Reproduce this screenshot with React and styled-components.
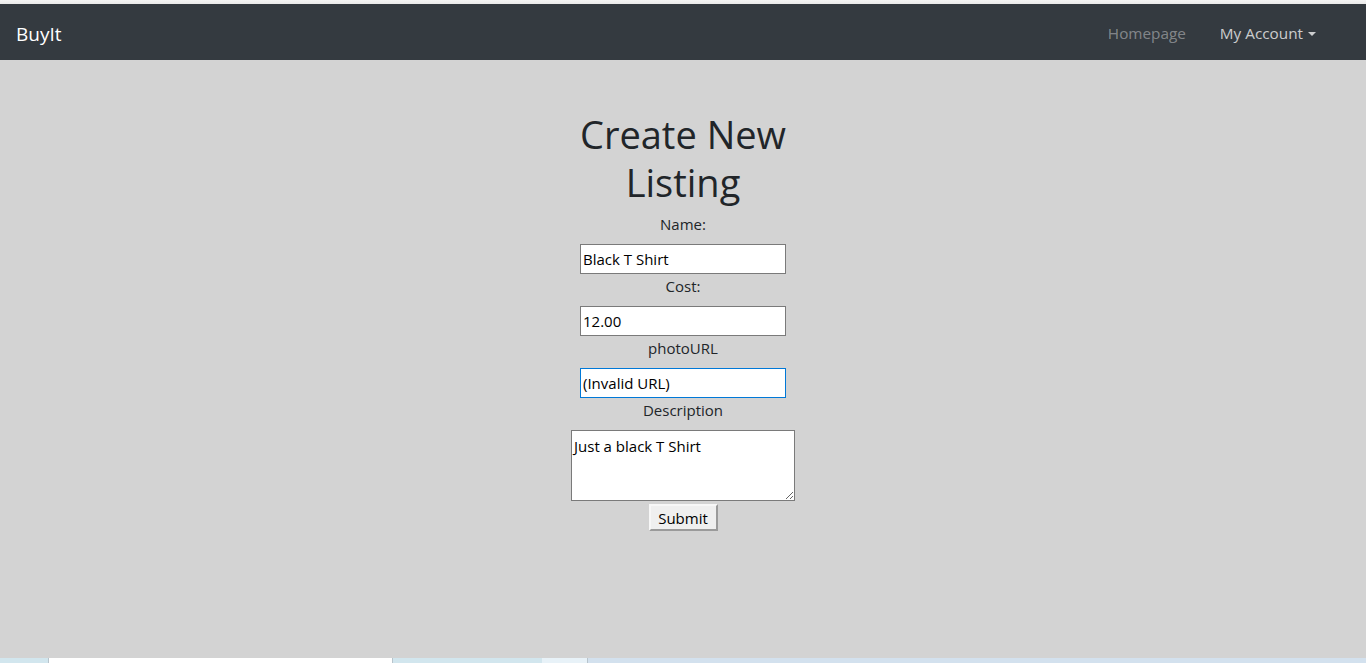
import React from 'react'
import styled, { createGlobalStyle } from 'styled-components'

const GlobalStyle = createGlobalStyle`
  html, body {
    margin: 0;
    padding: 0;
    background: #d3d3d3;
  }
  body {
    font-family: "Open Sans", "Noto Sans", Arial, sans-serif;
    font-size: 16px;
    color: #212529;
  }
`

const Page = styled.div`
  display: flex;
  flex-direction: column;
  height: 663px;
  overflow: hidden;
`

const TopStrip = styled.div`
  height: 4px;
  flex: 0 0 auto;
  background: linear-gradient(to bottom, #f4f4f4, #e9e9e9);
`

const Navbar = styled.nav`
  height: 56px;
  flex: 0 0 auto;
  background: #343a40;
  display: flex;
  align-items: center;
  padding: 0 16px;
`

const Brand = styled.span`
  color: #fff;
  font-size: 19px;
  margin-top: 3px;
`

const NavLinks = styled.div`
  margin-left: auto;
  margin-right: 26px;
  display: flex;
  align-items: center;
  gap: 18px;
`

const NavLink = styled.span`
  color: ${p => (p.$active ? 'rgba(255,255,255,0.75)' : 'rgba(255,255,255,0.4)')};
  font-size: 15.3px;
  padding: 0 8px;
  display: flex;
  align-items: center;
  margin-top: 2px;
`

const Caret = styled.span`
  display: inline-block;
  margin-left: 5px;
  margin-top: 1px;
  border-top: 4px solid currentColor;
  border-left: 4px solid transparent;
  border-right: 4px solid transparent;
`

const Main = styled.main`
  flex: 1 1 auto;
  display: flex;
  justify-content: center;
  padding-top: 50px;
`

const Form = styled.form`
  width: 224px;
  display: flex;
  flex-direction: column;
  align-items: center;
  text-align: center;
`

const Title = styled.h1`
  margin: 0 0 6px;
  font-size: 38px;
  font-weight: 400;
  line-height: 48px;
  width: 224px;
`

const Label = styled.label`
  display: block;
  line-height: 24px;
  font-size: 15px;
  margin-bottom: 8px;
`

const Input = styled.input`
  box-sizing: border-box;
  width: 206px;
  height: 30px;
  border: 1px solid ${p => (p.$focused ? '#0078d7' : '#7a7a7a')};
  background: #fff;
  padding: 0 2px;
  font-family: inherit;
  font-size: 15px;
  color: #000;
  outline: none;
`

const TextArea = styled.textarea`
  box-sizing: border-box;
  width: 224px;
  height: 71px;
  border: 1px solid #7a7a7a;
  background: #fff;
  padding: 5px 2px;
  font-family: inherit;
  font-size: 15px;
  color: #000;
  line-height: 20px;
  outline: none;
`

const SubmitButton = styled.button`
  box-sizing: border-box;
  margin-top: 3px;
  width: 69px;
  height: 27px;
  background: #efefef;
  border: 2px solid;
  border-color: #f7f7f7 #9a9a9a #9a9a9a #f7f7f7;
  font-family: inherit;
  font-size: 15px;
  color: #000;
  padding: 0;
`

const BottomStrip = styled.div`
  height: 5px;
  flex: 0 0 auto;
  display: flex;
`

const StripPart = styled.div`
  width: ${p => p.$w ? `${p.$w}px` : 'auto'};
  flex: ${p => (p.$w ? '0 0 auto' : '1 1 auto')};
  background: ${p => p.$bg};
  border-left: ${p => (p.$edge ? '1px solid #b8c4cc' : 'none')};
`

export default function App () {
  return (
    <>
      <GlobalStyle />
      <Page>
        <TopStrip />
        <Navbar>
          <Brand>BuyIt</Brand>
          <NavLinks>
            <NavLink>Homepage</NavLink>
            <NavLink $active>
              My Account
              <Caret />
            </NavLink>
          </NavLinks>
        </Navbar>
        <Main>
          <Form onSubmit={e => e.preventDefault()}>
            <Title>Create New Listing</Title>
            <Label>Name:</Label>
            <Input defaultValue='Black T Shirt' />
            <Label>Cost:</Label>
            <Input defaultValue='12.00' />
            <Label>photoURL</Label>
            <Input $focused defaultValue='(Invalid URL)' />
            <Label>Description</Label>
            <TextArea defaultValue='Just a black T Shirt' />
            <SubmitButton type='submit'>Submit</SubmitButton>
          </Form>
        </Main>
        <BottomStrip>
          <StripPart $w={48} $bg='#d2e6ee' />
          <StripPart $w={343} $bg='#ffffff' $edge />
          <StripPart $w={149} $bg='#d2e6ee' $edge />
          <StripPart $w={45} $bg='#e8f2f8' />
          <StripPart $bg='#d3e1ee' $edge />
        </BottomStrip>
      </Page>
    </>
  )
}
